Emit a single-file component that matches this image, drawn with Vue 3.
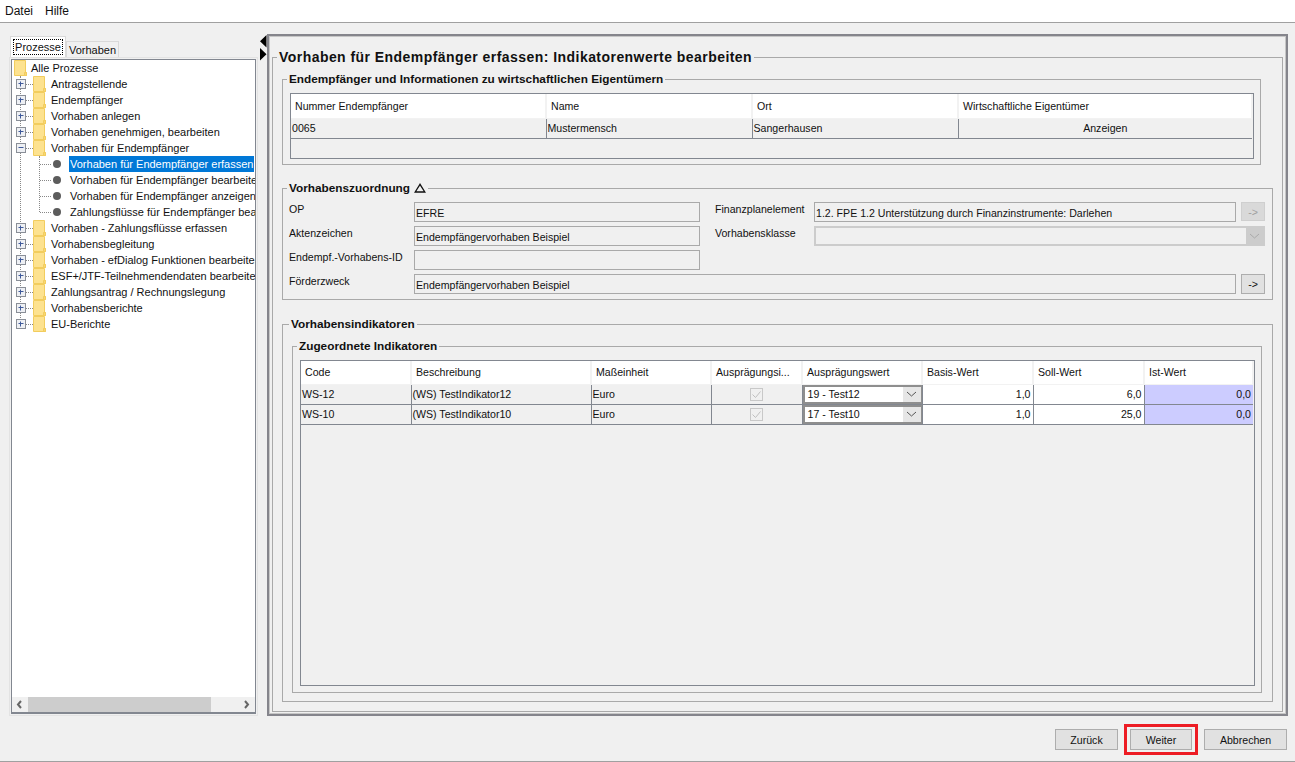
<script setup>
const tree = [
  { label: 'Antragstellende' },
  { label: 'Endempfänger' },
  { label: 'Vorhaben anlegen' },
  { label: 'Vorhaben genehmigen, bearbeiten' },
  {
    label: 'Vorhaben für Endempfänger',
    open: true,
    children: [
      { label: 'Vorhaben für Endempfänger erfassen', selected: true },
      { label: 'Vorhaben für Endempfänger bearbeiten' },
      { label: 'Vorhaben für Endempfänger anzeigen' },
      { label: 'Zahlungsflüsse für Endempfänger bearbeiten' }
    ]
  },
  { label: 'Vorhaben - Zahlungsflüsse erfassen' },
  { label: 'Vorhabensbegleitung' },
  { label: 'Vorhaben - efDialog Funktionen bearbeiten' },
  { label: 'ESF+/JTF-Teilnehmendendaten bearbeiten' },
  { label: 'Zahlungsantrag / Rechnungslegung' },
  { label: 'Vorhabensberichte' },
  { label: 'EU-Berichte' }
]

const indicators = [
  { code: 'WS-12', desc: '(WS) TestIndikator12', unit: 'Euro', value: '19 - Test12', basis: '1,0', soll: '6,0', ist: '0,0' },
  { code: 'WS-10', desc: '(WS) TestIndikator10', unit: 'Euro', value: '17 - Test10', basis: '1,0', soll: '25,0', ist: '0,0' }
]
</script>

<template>
  <div class="app">
    <div class="menubar">
      <span>Datei</span>
      <span>Hilfe</span>
    </div>

    <div class="main">
      <div class="left">
        <div class="tabs">
          <div class="tab active"><span>Prozesse</span></div>
          <div class="tab">Vorhaben</div>
        </div>
        <div class="tabpane">
          <div class="treebox">
            <div class="tree">
              <div class="vline root-line"></div>
              <div class="row root">
                <svg class="folder" width="13" height="16" viewBox="0 0 13 16"><path d="M.5.5h11v12h1v3H.5z" fill="#fde28f" stroke="#f2cd5e"/><path d="M10.5 12.5h2v3h-2z" fill="#f8d673" stroke="#f2cd5e"/></svg>
                <span class="label">Alle Prozesse</span>
              </div>
              <template v-for="node in tree" :key="node.label">
                <div class="row">
                  <svg class="expander" width="10" height="10" viewBox="0 0 10 10">
                    <rect x=".5" y=".5" width="9" height="9" fill="#eef0f4" stroke="#8a8f98"/>
                    <path d="M2.500 4.500h5" stroke="#3f5a9a"/>
                    <path v-if="!node.open" d="M4.500 2.500v5" stroke="#3f5a9a"/>
                  </svg>
                  <span class="hdots"></span>
                  <svg class="folder" width="13" height="16" viewBox="0 0 13 16"><path d="M.5.5h11v12h1v3H.5z" fill="#fde28f" stroke="#f2cd5e"/><path d="M10.5 12.5h2v3h-2z" fill="#f8d673" stroke="#f2cd5e"/></svg>
                  <span class="label">{{ node.label }}</span>
                </div>
                <div v-if="node.children" class="children">
                  <div class="vline child-line"></div>
                  <div v-for="child in node.children" :key="child.label" class="row child">
                    <span class="hdots long"></span>
                    <span class="dot"></span>
                    <span class="label" :class="{ selected: child.selected }">{{ child.label }}</span>
                  </div>
                </div>
              </template>
            </div>
            <div class="hscroll">
              <svg width="16" height="15" viewBox="0 0 16 15"><path d="M9 4L6 7.500 9 11" fill="none" stroke="#666" stroke-width="2"/></svg>
              <div class="track"><div class="thumb"></div></div>
              <svg width="16" height="15" viewBox="0 0 16 15"><path d="M6 4l3 3.500L6 11" fill="none" stroke="#666" stroke-width="2"/></svg>
            </div>
          </div>
        </div>
      </div>

      <div class="splitter">
        <svg width="7" height="26" viewBox="0 0 7 26"><path d="M6.500 0v12.500L0 6.200zM0 13v12.500l6.500-6.200z" fill="#000"/></svg>
      </div>

      <div class="right">
        <fieldset class="page">
          <legend class="page-title">Vorhaben für Endempfänger erfassen: Indikatorenwerte bearbeiten</legend>

          <fieldset class="group owner">
            <legend>Endempfänger und Informationen zu wirtschaftlichen Eigentümern</legend>
            <div class="table owner-table">
              <table>
                <colgroup>
                  <col style="width: 255px" />
                  <col style="width: 206px" />
                  <col style="width: 206px" />
                  <col />
                </colgroup>
                <thead>
                  <tr>
                    <th>Nummer Endempfänger</th>
                    <th>Name</th>
                    <th>Ort</th>
                    <th>Wirtschaftliche Eigentümer</th>
                  </tr>
                </thead>
                <tbody>
                  <tr>
                    <td>0065</td>
                    <td>Mustermensch</td>
                    <td>Sangerhausen</td>
                    <td class="cell-btn">Anzeigen</td>
                  </tr>
                </tbody>
              </table>
            </div>
          </fieldset>

          <fieldset class="group assign">
            <legend>Vorhabenszuordnung
              <svg class="tri" width="12" height="10" viewBox="0 0 12 10"><path d="M6 1.300L1.200 9h9.600z" fill="none" stroke="#111" stroke-width="1.300"/></svg>
            </legend>
            <div class="form">
              <label class="l1">OP</label>
              <div class="input">EFRE</div>
              <label class="l2">Finanzplanelement</label>
              <div class="input">1.2. FPE 1.2 Unterstützung durch Finanzinstrumente: Darlehen</div>
              <button class="arrow disabled">-&gt;</button>

              <label class="l1">Aktenzeichen</label>
              <div class="input">Endempfängervorhaben Beispiel</div>
              <label class="l2">Vorhabensklasse</label>
              <div class="combo-off">
                <div class="combo-field"></div>
                <svg width="17" height="14" viewBox="0 0 17 14"><path d="M4 5l4.500 4L13 5" fill="none" stroke="#aaa" stroke-width="1"/></svg>
              </div>

              <label class="l1">Endempf.-Vorhabens-ID</label>
              <div class="input"></div>
              <div class="filler"></div>

              <label class="l1">Förderzweck</label>
              <div class="input wide">Endempfängervorhaben Beispiel</div>
              <button class="arrow">-&gt;</button>
            </div>
          </fieldset>

          <fieldset class="group indicators">
            <legend>Vorhabensindikatoren</legend>
            <fieldset class="group inner">
              <legend>Zugeordnete Indikatoren</legend>
              <div class="table ind-table">
                <table>
                  <colgroup>
                    <col style="width: 110px" />
                    <col style="width: 180px" />
                    <col style="width: 120px" />
                    <col style="width: 91px" />
                    <col style="width: 120px" />
                    <col style="width: 111px" />
                    <col style="width: 111px" />
                    <col />
                  </colgroup>
                  <thead>
                    <tr>
                      <th>Code</th>
                      <th>Beschreibung</th>
                      <th>Maßeinheit</th>
                      <th>Ausprägungsi...</th>
                      <th>Ausprägungswert</th>
                      <th>Basis-Wert</th>
                      <th>Soll-Wert</th>
                      <th>Ist-Wert</th>
                    </tr>
                  </thead>
                  <tbody>
                    <tr v-for="row in indicators" :key="row.code">
                      <td>{{ row.code }}</td>
                      <td>{{ row.desc }}</td>
                      <td>{{ row.unit }}</td>
                      <td class="check-cell">
                        <svg width="13" height="13" viewBox="0 0 13 13"><rect x=".5" y=".5" width="12" height="12" fill="#f0f0f0" stroke="#c8c8c8"/><path d="M2.500 6.500l3 3 5-6" fill="none" stroke="#c0c0c0" stroke-width="1"/></svg>
                      </td>
                      <td class="combo-cell">
                        <div class="combo">
                          <span class="combo-text">{{ row.value }}</span>
                          <span class="combo-btn">
                            <svg width="17" height="14" viewBox="0 0 17 14"><path d="M4 5l4.500 4L13 5" fill="none" stroke="#555" stroke-width="1"/></svg>
                          </span>
                        </div>
                      </td>
                      <td class="num">{{ row.basis }}</td>
                      <td class="num">{{ row.soll }}</td>
                      <td class="num ist">{{ row.ist }}</td>
                    </tr>
                  </tbody>
                </table>
              </div>
            </fieldset>
          </fieldset>
        </fieldset>
      </div>
    </div>

    <div class="footer">
      <button class="btn back">Zurück</button>
      <div class="highlight"><button class="btn next">Weiter</button></div>
      <button class="btn cancel">Abbrechen</button>
    </div>
  </div>
</template>

<style>
html,
body {
  margin: 0;
  overflow: hidden;
}
</style>

<style scoped>
.app {
  width: 1295px;
  height: 762px;
  display: flex;
  flex-direction: column;
  box-sizing: border-box;
  background: #f0f0f0;
  border-bottom: 1px solid #a0a0a0;
  font-family: "Liberation Sans", Arial, sans-serif;
  font-size: 10.6px;
  color: #111;
}
.menubar {
  height: 22px;
  flex: none;
  display: flex;
  align-items: center;
  gap: 12px;
  padding: 0 5px;
  background: #fff;
  border-bottom: 1px solid #a0a0a0;
  font-size: 12px;
}
.main {
  flex: 1;
  min-height: 0;
  display: flex;
  padding-left: 9px;
}

/* left side */
.left {
  width: 249px;
  flex: none;
  display: flex;
  flex-direction: column;
  padding-top: 13px;
  font-size: 11px;
}
.tabs {
  display: flex;
  align-items: flex-end;
  height: 21px;
  padding-left: 1px;
  flex: none;
}
.tab {
  height: 16px;
  width: 53px;
  box-sizing: border-box;
  border: 1px solid #d9d9d9;
  border-bottom: 0;
  text-align: center;
  line-height: 16px;
}
.tab.active {
  width: 56px;
  height: 21px;
  background: #fff;
  padding: 2px;
}
.tab.active span {
  display: block;
  height: 16px;
  line-height: 14px;
  border: 1px dotted #000;
  box-sizing: border-box;
}
.tabpane {
  flex: 1;
  min-height: 0;
  display: flex;
  border: 1px solid #e3e3e3;
  padding: 1px 1px 1px 1px;
}
.treebox {
  flex: 1;
  min-width: 0;
  display: flex;
  flex-direction: column;
  background: #fff;
  border: 1px solid #828790;
  border-bottom-width: 2px;
}
.tree {
  flex: 1;
  min-height: 0;
  position: relative;
  overflow: hidden;
}
.row {
  height: 16px;
  display: flex;
  align-items: center;
  white-space: nowrap;
  position: relative;
  padding-left: 4px;
}
.row.root {
  padding-left: 2px;
}
.row.root .label {
  margin-left: 3px;
}
.row.child {
  padding-left: 28px;
}
.expander {
  flex: none;
  position: relative;
  background: #fff;
}
.hdots {
  width: 7px;
  flex: none;
  border-top: 1px dotted #888;
}
.hdots.long {
  width: 11px;
  margin-right: 2px;
}
.folder {
  flex: none;
}
.label {
  margin-left: 4px;
  padding: 0 1px;
  line-height: 16px;
}
.label.selected {
  background: #0078d7;
  color: #fff;
  width: 185px;
  box-sizing: border-box;
  overflow: hidden;
  flex: none;
}
.dot {
  width: 8px;
  height: 8px;
  border-radius: 50%;
  background: #5c5c5c;
  flex: none;
}
.child .label {
  margin-left: 8px;
}
.vline {
  position: absolute;
  border-left: 1px dotted #888;
}
.root-line {
  left: 8px;
  top: 16px;
  height: 252px;
}
.children {
  position: relative;
}
.child-line {
  left: 27px;
  top: 0;
  height: 56px;
}
.hscroll {
  height: 15px;
  flex: none;
  display: flex;
  background: #f0f0f0;
}
.hscroll svg {
  flex: none;
}
.track {
  flex: 1;
}
.thumb {
  width: 183px;
  height: 100%;
  background: #cdcdcd;
}

.splitter {
  width: 9px;
  flex: none;
  padding: 12px 0 0 2px;
  box-sizing: border-box;
}

/* right side */
.right {
  width: 1021px;
  flex: none;
  margin-top: 11px;
  display: flex;
  box-sizing: border-box;
  border: 2px solid #85858c;
  padding: 13px 3px 2px;
  outline: 1px solid #c6c6c6;
  outline-offset: -3px;
}
fieldset {
  margin: 0;
  min-width: 0;
  border: 1px solid #a9a9a9;
  display: flex;
  flex-direction: column;
}
legend {
  padding: 0 2px;
  margin-left: -3px;
  font-weight: 700;
  font-size: 11.8px;
  line-height: 14px;
  color: #111;
}
.page {
  flex: 1;
  padding: 7px 9px 9px;
}
.page-title {
  font-size: 14px;
  line-height: 16px;
  letter-spacing: 0.45px;
  margin-left: -5px;
}
.group {
  padding: 0;
}
.owner {
  margin-right: 12px;
  padding: 7px 6px 5px 7px;
}
.assign {
  margin-top: 16px;
  padding: 7px 7px 5px 6px;
}
.assign legend {
  margin-left: -2px;
}
.indicators {
  margin-top: 17px;
  flex: 1;
  padding: 8px 10px 8px 9px;
}
.inner {
  flex: 1;
  padding: 7px 6px 6px 7px;
}
.tri {
  margin-left: 1px;
  vertical-align: -1px;
}

.table {
  border: 1px solid #828790;
  box-sizing: border-box;
  flex: 1;
}
table {
  border-collapse: collapse;
  table-layout: fixed;
  width: 100%;
}
th {
  background: #fff;
  font-weight: 400;
  text-align: left;
  padding: 0 4px;
  height: 24px;
  border-right: 2px solid #f2f2f2;
  border-bottom: 1px solid #f2f2f2;
  box-sizing: border-box;
  white-space: nowrap;
  overflow: hidden;
}
td {
  height: 20px;
  padding: 0 1px;
  box-sizing: border-box;
  border-right: 1px solid #828790;
  border-bottom: 1px solid #828790;
  white-space: nowrap;
  overflow: hidden;
}
td:last-child {
  border-right: 0;
}
.owner-table {
  height: 66px;
  flex: none;
}
.cell-btn {
  text-align: center;
}
.ind-table th {
  height: 23px;
}
.check-cell {
  text-align: center;
  vertical-align: middle;
}
.check-cell svg {
  display: block;
  margin: 0 auto;
}
.combo-cell {
  padding: 0;
}
.combo {
  height: 19px;
  box-sizing: border-box;
  display: flex;
  border: 2px solid #8e8e8e;
  border-right-width: 1px;
  background: #fff;
}
.combo-text {
  flex: 1;
  padding-left: 3px;
  line-height: 14px;
}
.combo-btn {
  width: 18px;
  background: #e6e6e6;
  display: flex;
  align-items: center;
  justify-content: center;
}
.num {
  background: #fff;
  text-align: right;
  padding-right: 2px;
}
.ist {
  background: #ccccff;
}

.form {
  display: grid;
  grid-template-columns: 125px 286px 15px 99px 422px 5px 24px;
  grid-auto-rows: 20px;
  row-gap: 4px;
}
.form label {
  line-height: 14px;
}
.l2 {
  grid-column: 4;
}
.input {
  box-sizing: border-box;
  border: 1px solid #a9a9a9;
  padding: 1px 1px 0 1px;
  line-height: 18px;
  grid-column: 2;
  white-space: nowrap;
  overflow: hidden;
}
.l2 + .input {
  grid-column: 5;
}
.input.wide {
  grid-column: 2 / 6;
}
.arrow {
  grid-column: 7;
  height: 19px;
  padding: 0;
  margin: 0;
  border: 1px solid #adadad;
  background: #e1e1e1;
  font: inherit;
  color: #111;
}
.input.wide + .arrow {
  height: 20px;
}
.arrow.disabled {
  color: #a0a0a0;
  background: #d9d9d9;
  border-color: #cfcfcf;
}
.combo-off {
  grid-column: 5 / 8;
  display: flex;
  align-items: center;
  background: #cccccc;
  padding: 2px;
  box-sizing: border-box;
}
.combo-field {
  flex: 1;
  height: 100%;
  background: #f0f0f0;
}
.filler {
  grid-column: 3 / 8;
}

/* footer */
.footer {
  height: 45px;
  flex: none;
  display: flex;
  align-items: flex-start;
  padding: 8px 8px 0 0;
  justify-content: flex-end;
  box-sizing: border-box;
}
.btn {
  height: 21px;
  padding: 0;
  margin: 0;
  border: 1px solid #adadad;
  background: #e1e1e1;
  font: inherit;
  color: #111;
}
.back {
  width: 63px;
  margin-top: 5px;
  margin-right: 6px;
}
.next {
  width: 62px;
  display: block;
}
.highlight {
  border: 3px solid #ed1c24;
  padding: 2px 3px;
  margin-right: 6px;
}
.cancel {
  width: 83px;
  margin-top: 5px;
}
</style>
